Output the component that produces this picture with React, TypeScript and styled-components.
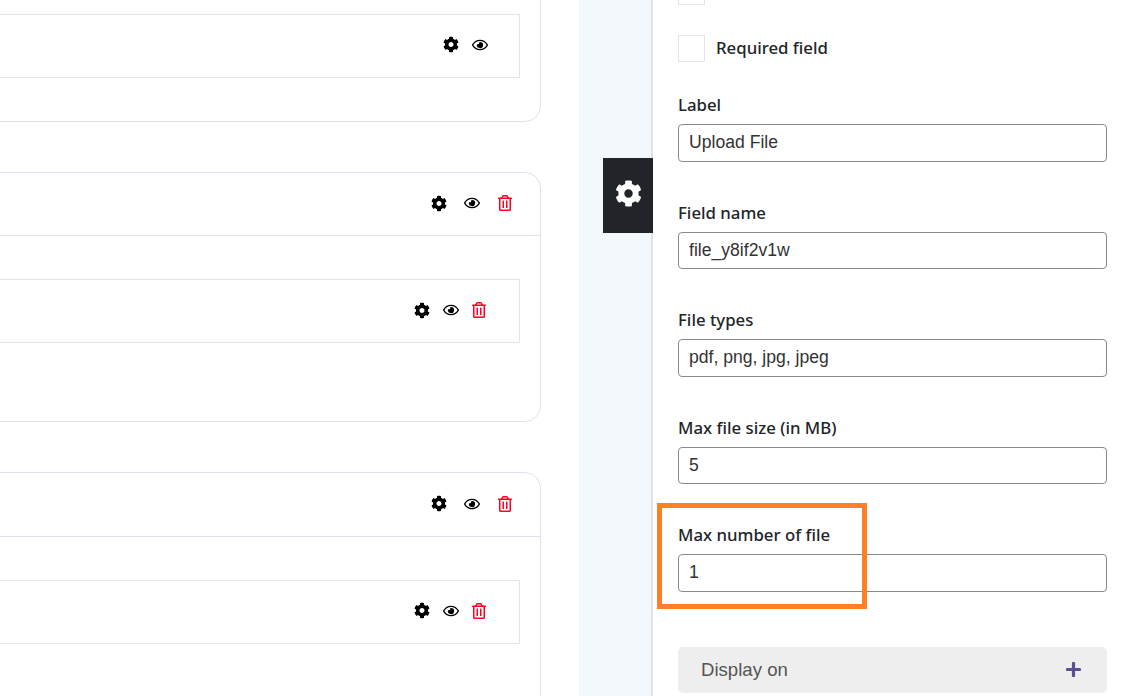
import React from "react";
import styled, { createGlobalStyle } from "styled-components";
import { FaCog, FaPlus, FaRegEye, FaRegTrashAlt } from "react-icons/fa";

const GlobalStyle = createGlobalStyle`
  html, body {
    margin: 0;
    padding: 0;
    height: 100%;
    overflow: hidden;
    background: #fff;
  }
  * {
    box-sizing: border-box;
  }
`;

const Page = styled.div`
  position: relative;
  display: flex;
  width: 1131px;
  height: 696px;
  overflow: hidden;
  font-family: "Liberation Sans", Arial, sans-serif;
`;

// --- Left side: form sections ---

const Builder = styled.div`
  flex: 0 0 579px;
  height: 100%;
  overflow: hidden;
  padding-right: 38px;
`;

const Card = styled.section<{ $offset?: number }>`
  margin: ${(p) => p.$offset ?? 0}px 0 50px -40px;
  border: 1px solid #e0e0ec;
  border-radius: 16px;
`;

const CardHead = styled.div`
  display: flex;
  justify-content: flex-end;
  align-items: center;
  gap: 17px;
  height: 63.5px;
  padding: 0 27px 2px 0;
  border-bottom: 1px solid #e0e0ec;
`;

const CardBody = styled.div<{ $top: number; $bottom: number }>`
  padding: ${(p) => p.$top}px 20px ${(p) => p.$bottom}px 20px;
`;

const ItemRow = styled.div<{ $pad: number }>`
  display: flex;
  justify-content: flex-end;
  align-items: center;
  gap: 12.5px;
  height: 64px;
  padding: 0 ${(p) => p.$pad}px 2px 0;
  border: 1px solid #e4e4e4;
`;

const IconSlot = styled.span<{ $color?: string; $size: number }>`
  display: flex;
  align-items: center;
  justify-content: center;
  width: 16px;
  height: 16px;
  font-size: ${(p) => p.$size}px;
  color: ${(p) => p.$color ?? "#000"};
`;

const Actions = ({ withDelete = true }: { withDelete?: boolean }) => (
  <>
    <IconSlot $size={17}>
      <FaCog />
    </IconSlot>
    <IconSlot $size={16}>
      <FaRegEye />
    </IconSlot>
    {withDelete && (
      <IconSlot $size={16} $color="#ff0022">
        <FaRegTrashAlt />
      </IconSlot>
    )}
  </>
);

// --- Middle strip and toggle ---

const Strip = styled.div`
  flex: 0 0 74px;
  height: 100%;
  background: #f3f8fc;
  border-right: 2px solid #dee2e6;
`;

const SettingsToggle = styled.button`
  position: absolute;
  left: 603px;
  top: 158px;
  display: flex;
  align-items: center;
  justify-content: center;
  width: 50px;
  height: 75px;
  padding: 0 0 4px;
  border: none;
  background: #212529;
  color: #fff;
  font-size: 27px;
`;

// --- Right side: settings panel ---

const Panel = styled.aside`
  flex: 1;
  height: 100%;
  overflow: hidden;
  padding: 0 24px 0 25px;
  color: #212529;
`;

const Checkbox = styled.span`
  display: block;
  flex: none;
  width: 27px;
  height: 27px;
  border: 1px solid #e4e4e4;
`;

const ClippedCheckbox = styled(Checkbox)`
  margin-top: -22px;
`;

const CheckRow = styled.div`
  display: flex;
  align-items: center;
  gap: 11px;
  margin: 30px 0 31px;
`;

const CheckLabel = styled.span`
  margin-top: -2px;
  font-family: "Noto Sans", sans-serif;
  font-size: 16.8px;
  font-weight: 500;
  line-height: 24px;
`;

const Field = styled.div`
  height: 107.5px;
`;

const FieldLabel = styled.label`
  display: block;
  height: 31px;
  font-family: "Noto Sans", sans-serif;
  font-size: 16.8px;
  font-weight: 500;
  line-height: 24px;
`;

const FieldInput = styled.input`
  display: block;
  width: 100%;
  height: 37.5px;
  padding: 0 10px;
  border: 1px solid #8a8a8a;
  border-radius: 4px;
  background: #fff;
  color: #333;
  font-family: "Liberation Sans", Arial, sans-serif;
  font-size: 17.6px;
  outline: none;
`;

const Accordion = styled.div`
  display: flex;
  justify-content: space-between;
  align-items: center;
  height: 46px;
  margin-top: 16px;
  padding: 0 25px 0 23px;
  border-radius: 5px;
  background: #eeeeef;
  color: #555;
  font-size: 18.6px;
`;

const PlusIcon = styled.span`
  display: flex;
  color: #5c4f8f;
  font-size: 17px;
`;

const Highlight = styled.div`
  position: absolute;
  left: 657px;
  top: 503px;
  width: 210px;
  height: 106px;
  border: 5px solid #ff7f27;
  pointer-events: none;
`;

const fields = [
  { label: "Label", value: "Upload File" },
  { label: "Field name", value: "file_y8if2v1w" },
  { label: "File types", value: "pdf, png, jpg, jpeg" },
  { label: "Max file size (in MB)", value: "5" },
  { label: "Max number of file", value: "1" },
];

export default function App() {
  return (
    <Page>
      <GlobalStyle />
      <Builder>
        <Card $offset={-100.1}>
          <CardBody $top={113} $bottom={43}>
            <ItemRow $pad={31.5}>
              <Actions withDelete={false} />
            </ItemRow>
          </CardBody>
        </Card>
        <Card>
          <CardHead>
            <Actions />
          </CardHead>
          <CardBody $top={43} $bottom={78}>
            <ItemRow $pad={32}>
              <Actions />
            </ItemRow>
          </CardBody>
        </Card>
        <Card>
          <CardHead>
            <Actions />
          </CardHead>
          <CardBody $top={43} $bottom={78}>
            <ItemRow $pad={32}>
              <Actions />
            </ItemRow>
          </CardBody>
        </Card>
      </Builder>

      <Strip />
      <SettingsToggle aria-label="Settings">
        <FaCog />
      </SettingsToggle>

      <Panel>
        <ClippedCheckbox />
        <CheckRow>
          <Checkbox />
          <CheckLabel>Required field</CheckLabel>
        </CheckRow>
        {fields.map((field) => (
          <Field key={field.label}>
            <FieldLabel>{field.label}</FieldLabel>
            <FieldInput defaultValue={field.value} />
          </Field>
        ))}
        <Accordion>
          Display on
          <PlusIcon>
            <FaPlus />
          </PlusIcon>
        </Accordion>
      </Panel>
      <Highlight />
    </Page>
  );
}
